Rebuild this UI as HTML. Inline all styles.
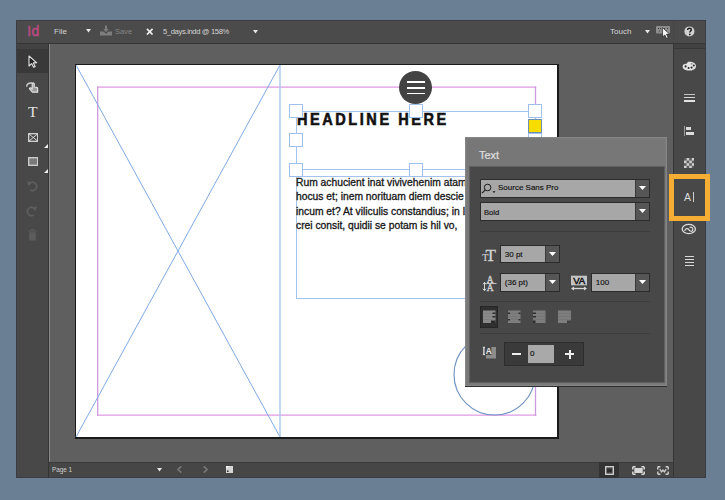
<!DOCTYPE html>
<html><head><meta charset="utf-8">
<style>
*{margin:0;padding:0;box-sizing:border-box}
html,body{width:725px;height:500px;overflow:hidden;background:#6a7f94;font-family:"Liberation Sans",sans-serif;position:relative}
div,span,svg{position:absolute}
.t{white-space:nowrap;line-height:1}
.h{width:14px;height:14px;border:1.2px solid #9fc0ec;background:#fff}
.dd{background:#a7a7a7;border:1.5px solid #2b2b2b}
.ddb{background:#565656;border-left:1.5px solid #3a3a3a}
</style></head><body>
<!-- window frame -->
<div style="left:16px;top:20px;width:690px;height:458px;background:#484848"></div>
<!-- title bar -->
<div style="left:16px;top:20px;width:690px;height:23px;background:#4b4b4b"></div>
<div style="left:16px;top:43px;width:690px;height:1px;background:#353535"></div>
<!-- left toolbar -->
<div style="left:16px;top:44px;width:32px;height:434px;background:#484848"></div>
<div style="left:16px;top:44px;width:32px;height:5px;background:#434343"></div>
<div style="left:16px;top:49px;width:32px;height:24px;background:#393939"></div>
<div style="left:48px;top:44px;width:1px;height:434px;background:#343434"></div>
<!-- canvas -->
<div style="left:49px;top:44px;width:624px;height:418px;background:#5f5f5f"></div>
<div style="left:49px;top:44px;width:1px;height:418px;background:#8a8a8a"></div>
<!-- status bar -->
<div style="left:49px;top:462px;width:624px;height:16px;background:#464646"></div>
<div style="left:49px;top:462px;width:624px;height:1px;background:#3a3a3a"></div>
<!-- right panel -->
<div style="left:673px;top:44px;width:33px;height:434px;background:#484848"></div>
<div style="left:673px;top:44px;width:33px;height:4px;background:#424242"></div>
<div style="left:673px;top:48px;width:33px;height:1px;background:#383838"></div>
<div style="left:673px;top:43px;width:1px;height:435px;background:#353535"></div>
<div style="left:673px;top:20px;width:1px;height:23px;background:#474747"></div>

<div style="left:16px;top:20px;width:690px;height:1px;background:#3a3e42"></div>
<div style="left:16px;top:20px;width:1px;height:458px;background:#3a3e42"></div>
<div style="left:705px;top:20px;width:1px;height:458px;background:#3a3e42"></div>
<div style="left:16px;top:477px;width:690px;height:1px;background:#3a3e42"></div>
<!-- page -->
<div style="left:75px;top:64px;width:484px;height:375px;background:#1a1a1a"></div>
<div style="left:76px;top:65px;width:481px;height:372px;background:#fff"></div>
<svg style="left:0;top:0" width="725" height="500" viewBox="0 0 725 500">
  <line x1="97" y1="87.2" x2="536.3" y2="87.2" stroke="#e09ae4" stroke-width="1.3"/>
  <line x1="97" y1="415.1" x2="536.3" y2="415.1" stroke="#e09ae4" stroke-width="1.3"/>
  <line x1="97.7" y1="86.4" x2="97.7" y2="415.9" stroke="#cc9ade" stroke-width="1.3"/>
  <line x1="535.5" y1="86.4" x2="535.5" y2="415.9" stroke="#cc9ade" stroke-width="1.3"/>
  <line x1="76" y1="65" x2="280" y2="437" stroke="#7fa9e0" stroke-width="1"/>
  <line x1="280" y1="65" x2="76" y2="437" stroke="#7fa9e0" stroke-width="1"/>
  <line x1="280" y1="65" x2="280" y2="437" stroke="#a9c7ee" stroke-width="1.4"/>
  <!-- headline frame -->
  <rect x="296.5" y="111.5" width="239" height="58" fill="none" stroke="#a4c3ec" stroke-width="1"/>
  <!-- body frame -->
  <rect x="296.5" y="176.5" width="239" height="122" fill="none" stroke="#a4c3ec" stroke-width="1"/>
  <!-- circle frame -->
  <circle cx="494.5" cy="374.5" r="40.5" fill="none" stroke="#6e92c2" stroke-width="1.15"/>
</svg>
<!-- headline text -->
<div class="t" style="left:297px;top:111px;font-size:16.5px;font-weight:bold;letter-spacing:2.9px;color:#111;-webkit-text-stroke:0.6px #111;transform:scaleX(0.88);transform-origin:0 0">HEADLINE HERE</div>
<!-- body text -->
<div class="t" style="left:296px;top:175.8px;font-size:10.3px;line-height:14.45px;color:#151515;-webkit-text-stroke:0.3px #151515">Rum achucient inat vivivehenim atam<br>hocus et; inem norituam diem descie<br>incum et? At viliculis constandius; in I<br>crei consit, quidii se potam is hil vo,</div>
<!-- handles -->
<div class="h" style="left:289px;top:104px"></div>
<div class="h" style="left:289px;top:133px"></div>
<div class="h" style="left:289px;top:163px"></div>
<div class="h" style="left:408.5px;top:104px"></div>
<div class="h" style="left:408.5px;top:163px"></div>
<div class="h" style="left:528px;top:104px"></div>
<div class="h" style="left:528px;top:133px"></div>
<div style="left:528px;top:119px;width:14px;height:14px;border:1px solid #6f8fb0;background:#f7dc00"></div>


<!-- menu circle -->
<div style="left:399px;top:71px;width:33px;height:33px;border-radius:50%;background:#434343"></div>
<div style="left:407px;top:81px;width:18px;height:1.6px;background:#fff"></div>
<div style="left:407px;top:87px;width:18px;height:1.6px;background:#fff"></div>
<div style="left:407px;top:92.6px;width:18px;height:1.6px;background:#fff"></div>

<!-- Text panel -->
<div style="left:465px;top:137px;width:202px;height:250px;background:#2e2e2e"></div>
<div style="left:465px;top:137px;width:202px;height:249px;background:#777;box-shadow:inset 0 0 0 1px #858585, inset 0 0 0 2.5px #7b7b7b"></div>
<div style="left:470px;top:166.5px;width:194px;height:215.5px;background:#484848;box-shadow:0 0 0 1px #606060"></div>
<div class="t" style="left:479px;top:149.6px;font-size:11px;color:#e0e0e0;-webkit-text-stroke:0.2px #e0e0e0">Text</div>

<!-- font dropdown -->
<div class="dd" style="left:480px;top:179px;width:170px;height:19px"></div>
<div class="ddb" style="left:635px;top:180px;width:14px;height:17px"></div>
<svg style="left:639px;top:186px" width="7" height="4" viewBox="0 0 7 4"><path d="M0 0H7L3.5 4Z" fill="#fff"/></svg>
<svg style="left:481px;top:182px" width="16" height="13" viewBox="0 0 16 13"><circle cx="6.6" cy="5.5" r="3.3" fill="none" stroke="#1a1a1a" stroke-width="1"/><line x1="4.3" y1="7.9" x2="1" y2="11.2" stroke="#1a1a1a" stroke-width="1.2"/><path d="M11.5 9.3h3l-1.5 1.6z" fill="#1a1a1a"/></svg>
<div class="t" style="left:498px;top:184px;font-size:8px;color:#111;-webkit-text-stroke:0.15px #111">Source Sans Pro</div>
<!-- style dropdown -->
<div class="dd" style="left:480px;top:202px;width:170px;height:19px"></div>
<div class="ddb" style="left:635px;top:203px;width:14px;height:17px"></div>
<svg style="left:639px;top:209px" width="7" height="4" viewBox="0 0 7 4"><path d="M0 0H7L3.5 4Z" fill="#fff"/></svg>
<div class="t" style="left:484px;top:209px;font-size:7.6px;color:#111;-webkit-text-stroke:0.15px #111">Bold</div>
<div style="left:480px;top:231px;width:170px;height:1px;background:#3c3c3c"></div>
<!-- size -->
<div class="dd" style="left:500px;top:245px;width:60px;height:18px"></div>
<div class="ddb" style="left:545px;top:246px;width:14px;height:16px"></div>
<svg style="left:549px;top:252px" width="7" height="4" viewBox="0 0 7 4"><path d="M0 0H7L3.5 4Z" fill="#fff"/></svg>
<div class="t" style="left:504.8px;top:250.8px;font-size:8px;color:#111;-webkit-text-stroke:0.15px #111">30 pt</div>
<!-- leading -->
<div class="dd" style="left:500px;top:273px;width:60px;height:19px"></div>
<div class="ddb" style="left:545px;top:274px;width:14px;height:17px"></div>
<svg style="left:549px;top:280px" width="7" height="4" viewBox="0 0 7 4"><path d="M0 0H7L3.5 4Z" fill="#fff"/></svg>
<div class="t" style="left:504.8px;top:278.8px;font-size:8px;color:#111;-webkit-text-stroke:0.15px #111">(36 pt)</div>
<!-- tracking -->
<div class="dd" style="left:591px;top:273px;width:59px;height:19px"></div>
<div class="ddb" style="left:635px;top:274px;width:14px;height:17px"></div>
<svg style="left:639px;top:280px" width="7" height="4" viewBox="0 0 7 4"><path d="M0 0H7L3.5 4Z" fill="#fff"/></svg>
<div class="t" style="left:595.8px;top:278.8px;font-size:8px;color:#111;-webkit-text-stroke:0.15px #111">100</div>
<div style="left:480px;top:301px;width:170px;height:1px;background:#3e3e3e"></div>
<!-- align buttons -->
<div style="left:480px;top:306px;width:18px;height:22px;background:#303030;border:1px solid #262626"></div>

<div style="left:480px;top:333px;width:170px;height:1px;background:#3e3e3e"></div>

<!-- panel icons -->
<svg style="left:480px;top:247px" width="20" height="16" viewBox="0 0 20 16"><text x="2.2" y="13.8" font-family="Liberation Serif" font-size="10" fill="#d4d4d4" stroke="#d4d4d4" stroke-width="0.2">T</text><text x="5.5" y="13.8" font-family="Liberation Serif" font-size="17" fill="#d4d4d4" stroke="#d4d4d4" stroke-width="0.3">T</text></svg>
<svg style="left:480px;top:274px" width="20" height="19" viewBox="0 0 20 19"><text x="6.8" y="8.6" font-family="Liberation Serif" font-size="9.4" fill="#d4d4d4" stroke="#d4d4d4" stroke-width="0.35">A</text><rect x="6.5" y="9" width="10" height="0.9" fill="#d4d4d4"/><text x="6.8" y="16.9" font-family="Liberation Serif" font-size="9.4" fill="#d4d4d4" stroke="#d4d4d4" stroke-width="0.35">A</text><path d="M4.5 8.5v8M2.9 10.3l1.6-2 1.6 2M2.9 14.7l1.6 2 1.6-2" fill="none" stroke="#d4d4d4" stroke-width="1"/></svg>
<svg style="left:570px;top:275px" width="18" height="16" viewBox="0 0 18 16"><rect x="1" y="0.7" width="16" height="9.6" fill="#c4c4c4"/><text x="9" y="9.4" font-family="Liberation Sans" font-size="9.6" text-anchor="middle" fill="#111" stroke="#111" stroke-width="0.45" letter-spacing="-0.4">VA</text><path d="M2.5 13.5h13" stroke="#d8d8d8" stroke-width="1.3"/><path d="M1 13.5l3-2v4zM17 13.5l-3-2v4z" fill="#d8d8d8"/></svg>
<!-- align icons -->
<svg style="left:483px;top:310px" width="13" height="14" viewBox="0 0 13 14"><rect x="0" y="0.5" width="12.5" height="12.5" fill="#8a8a8a"/><path d="M0 3.5h12.5M0 6.5h12.5M0 9.5h12.5" stroke="#7a7a7a" stroke-width="0.6"/><path d="M9.5 2.5h3v1.5h-3zM9.5 6h3v1.5h-3zM8 10.5h4.5v2.5H8z" fill="#2a2a2a"/></svg>
<svg style="left:508px;top:310px" width="13" height="14" viewBox="0 0 13 14"><rect x="0" y="0.5" width="12.5" height="12.5" fill="#7e7e7e"/><path d="M0 3.5h12.5M0 6.5h12.5M0 9.5h12.5" stroke="#707070" stroke-width="0.6"/><path d="M0 2.5h2v1.5H0zM10.5 2.5h2v1.5h-2zM0 9h2v1.5H0zM10.5 9h2v1.5h-2z" fill="#2e2e2e"/></svg>
<svg style="left:533px;top:310px" width="13" height="14" viewBox="0 0 13 14"><rect x="0" y="0.5" width="12.5" height="12.5" fill="#7e7e7e"/><path d="M0 3.5h12.5M0 6.5h12.5M0 9.5h12.5" stroke="#707070" stroke-width="0.6"/><path d="M0 2.5h3v1.5H0zM0 6h3v1.5H0zM0 10.5h2.5v2.5H0z" fill="#2e2e2e"/></svg>
<svg style="left:558px;top:310px" width="14" height="14" viewBox="0 0 14 14"><rect x="0" y="0.5" width="13" height="12.5" fill="#7e7e7e"/><path d="M0 3.5h13M0 6.5h13M0 9.5h13" stroke="#707070" stroke-width="0.6"/><path d="M9 10.5h4v2.5H9z" fill="#404040"/></svg>
<!-- baseline shift icon -->
<svg style="left:482px;top:346px" width="16" height="14" viewBox="0 0 16 14"><rect x="4" y="1" width="10" height="11.5" fill="#8c8c8c"/><rect x="3.6" y="1" width="5.8" height="8" fill="#484848"/><text x="3.8" y="8.2" font-family="Liberation Sans" font-weight="bold" font-size="8.2" fill="#e8e8e8">A</text><path d="M1.9 1.6v6.8" stroke="#e8e8e8" stroke-width="1.3"/><path d="M0.8 1.3h2.2M0.8 8.6h2.2" stroke="#e8e8e8" stroke-width="1"/></svg>
<!-- baseline shift -->
<div style="left:504px;top:342px;width:80px;height:24px;background:#3a3a3a;border:1px solid #2e2e2e"></div>
<div style="left:528px;top:345px;width:26px;height:18px;background:#a9a9a9"></div>
<div style="left:512px;top:353px;width:9px;height:2px;background:#eee"></div>
<div style="left:565px;top:353px;width:9px;height:2px;background:#eee"></div>
<div style="left:568.5px;top:349.5px;width:2px;height:9px;background:#eee"></div>
<div class="t" style="left:530px;top:350px;font-size:8px;color:#111;-webkit-text-stroke:0.2px #111">0</div>


<!-- ===== title bar content ===== -->
<div class="t" style="left:27.3px;top:24px;font-size:14px;color:#b94a7f;-webkit-text-stroke:0.5px #b94a7f;letter-spacing:0.2px">Id</div>
<div class="t" style="left:54px;top:27.5px;font-size:8px;color:#d4d4d4">File</div>
<svg style="left:86px;top:29px" width="5" height="4" viewBox="0 0 5 4"><path d="M0 0H5L2.5 3.5Z" fill="#e6e6e6"/></svg>
<svg style="left:99px;top:24.5px" width="14" height="11" viewBox="0 0 14 11"><path d="M7 0.5v4.5" stroke="#7e7e7e" stroke-width="2"/><path d="M4.3 4h5.4L7 7.2Z" fill="#7e7e7e"/><path d="M1 6.5h3.5L7 8.8l2.5-2.3H13v4H1Z" fill="#7e7e7e"/></svg>
<div class="t" style="left:115px;top:28px;font-size:7.5px;color:#858585">Save</div>
<svg style="left:146px;top:27.6px" width="7.5" height="7.5" viewBox="0 0 8 8"><path d="M1 1L7 7M7 1L1 7" stroke="#f0f0f0" stroke-width="1.7"/></svg>
<div class="t" style="left:163px;top:28px;font-size:7.6px;letter-spacing:-0.35px;color:#d4d4d4">5_days.indd @ 158%</div>
<svg style="left:253px;top:29.5px" width="5" height="4" viewBox="0 0 5 4"><path d="M0 0H5L2.5 3.5Z" fill="#e6e6e6"/></svg>
<div class="t" style="left:610px;top:27.5px;font-size:8px;color:#d4d4d4">Touch</div>
<svg style="left:644.5px;top:29.5px" width="5" height="4" viewBox="0 0 5 4"><path d="M0 0H5L2.5 3.5Z" fill="#e6e6e6"/></svg>
<svg style="left:655px;top:25px" width="17" height="14" viewBox="0 0 17 14"><rect x="1" y="1" width="14" height="7.5" rx="1" fill="#8e8e8e"/><path d="M3 3h1v1H3zM5 3h1v1H5zM9 3h1v1H9zM12 3h1v1h-1zM4 5.5h1v1H4zM11 5.5h1v1h-1z" fill="#3a3a3a"/><path d="M7.4 2.6L7.6 12L9.8 10L11.5 13.4L13.2 12.6L11.5 9.3L14.6 9.1Z" fill="#f4f4f4" stroke="#222" stroke-width="0.7" stroke-linejoin="round"/></svg>
<svg style="left:684px;top:26px" width="11" height="11" viewBox="0 0 11 11"><circle cx="5.4" cy="5.4" r="5" fill="#d2d2d2"/><path d="M3.6 4C3.6 2.8 4.4 2.2 5.5 2.2C6.7 2.2 7.4 2.9 7.4 3.8C7.4 5 5.8 5.2 5.8 6.6" fill="none" stroke="#1e1e1e" stroke-width="1.4"/><circle cx="5.8" cy="8.4" r="0.85" fill="#1e1e1e"/></svg>

<!-- ===== left tools ===== -->
<svg style="left:28px;top:55px" width="10" height="13" viewBox="0 0 10 13"><path d="M1 1V11L3.6 8.6L5.6 12.2L7.2 11.4L5.3 7.9L8.8 7.8Z" fill="#222" stroke="#e4e4e4" stroke-width="1.1" stroke-linejoin="round"/></svg>
<svg style="left:22px;top:78px" width="20" height="18" viewBox="0 0 20 18"><path d="M4.6 8.8C4.8 6.2 7 4.8 10 5" fill="none" stroke="#cfcfcf" stroke-width="1.3"/><path d="M7.4 10.6L10.4 14.2H15.6V10.6Q15.6 9.6 14.6 9.4L12.2 9V5.6Q11.2 4.2 10.2 5.6V11.2L8.8 9.8Q7.8 9.6 7.4 10.6Z" fill="#9a9a9a" stroke="#e0e0e0" stroke-width="1.2" stroke-linejoin="round"/></svg>
<div class="t" style="left:28px;top:106px;font-family:'Liberation Serif',serif;font-size:14px;color:#e0e0e0;transform:scaleX(1.12);transform-origin:0 0">T</div>
<svg style="left:27.5px;top:132.5px" width="10.5" height="9" viewBox="0 0 10.5 9"><rect x="0.7" y="0.7" width="9" height="7.6" fill="none" stroke="#d6d6d6" stroke-width="1.3"/><path d="M1 1L9.5 8M9.5 1L1 8" stroke="#d6d6d6" stroke-width="1"/></svg>
<svg style="left:44px;top:144px" width="4" height="4" viewBox="0 0 4 4"><path d="M4 0V4H0Z" fill="#eee"/></svg>
<svg style="left:27.5px;top:156.5px" width="10.5" height="9" viewBox="0 0 10.5 9"><rect x="0.7" y="0.7" width="9" height="7.6" fill="#7a7a7a" stroke="#d2d2d2" stroke-width="1.3"/></svg>
<svg style="left:44px;top:168.5px" width="4" height="4" viewBox="0 0 4 4"><path d="M4 0V4H0Z" fill="#eee"/></svg>
<svg style="left:26px;top:180px" width="12" height="12" viewBox="0 0 12 12"><path d="M3.6 3.6A4.1 4.1 0 1 1 4.4 10" fill="none" stroke="#5e5e5e" stroke-width="1.7"/><path d="M1.2 1.2L6.2 2.4L2.4 6.2Z" fill="#5e5e5e"/></svg>
<svg style="left:26px;top:205px" width="12" height="12" viewBox="0 0 12 12"><path d="M8.4 3.6A4.1 4.1 0 1 0 7.6 10" fill="none" stroke="#5e5e5e" stroke-width="1.7"/><path d="M10.8 1.2L5.8 2.4L9.6 6.2Z" fill="#5e5e5e"/></svg>
<svg style="left:28px;top:229px" width="9" height="12" viewBox="0 0 9 12"><path d="M3 0.5H6M0.5 2H8.5" stroke="#5c5c5c" stroke-width="1.2"/><rect x="1.2" y="3.2" width="6.6" height="8.3" fill="#5c5c5c"/></svg>

<!-- ===== right panel icons ===== -->
<svg style="left:682px;top:61px" width="15" height="10" viewBox="0 0 15 10"><path d="M6 0.8C9.5 0.2 14 1.6 14 5.2C14 8.2 10.5 9.6 7 9.6C3 9.6 0.6 8 0.6 5.6C0.6 3.6 2.4 2.6 4.6 2.8Z" fill="#e4e4e4"/><circle cx="3.6" cy="5.4" r="1.05" fill="#2a2a2a"/><circle cx="6.6" cy="7" r="1.05" fill="#2a2a2a"/><circle cx="9.6" cy="6.6" r="1.05" fill="#2a2a2a"/><circle cx="11.8" cy="4.6" r="1" fill="#2a2a2a"/><circle cx="9.6" cy="2.8" r="0.9" fill="#8a8a8a"/></svg>
<div style="left:683.5px;top:93.9px;width:11px;height:1.1px;background:#c4c4c4"></div>
<div style="left:683.5px;top:96.9px;width:11px;height:1.3px;background:#d8d8d8"></div>
<div style="left:683.5px;top:100.2px;width:11px;height:1.7px;background:#e2e2e2"></div>
<div style="left:684px;top:126px;width:1.3px;height:10px;background:#9a9a9a"></div>
<div style="left:685.8px;top:126.8px;width:5.7px;height:3.2px;background:#dcdcdc"></div>
<div style="left:685.8px;top:131.5px;width:8.3px;height:3.6px;background:#dcdcdc"></div>
<svg style="left:683.7px;top:157.5px" width="10.4" height="10.4" viewBox="0 0 10.4 10.4"><rect width="10.4" height="10.4" fill="#d0d0d0"/><g fill="#5c5c5c"><rect x="0.00" y="0.00" width="2.60" height="2.60"/><rect x="5.20" y="0.00" width="2.60" height="2.60"/><rect x="2.60" y="2.60" width="2.60" height="2.60"/><rect x="7.80" y="2.60" width="2.60" height="2.60"/><rect x="0.00" y="5.20" width="2.60" height="2.60"/><rect x="5.20" y="5.20" width="2.60" height="2.60"/><rect x="2.60" y="7.80" width="2.60" height="2.60"/><rect x="7.80" y="7.80" width="2.60" height="2.60"/></g></svg>
<div style="left:668.7px;top:173.8px;width:41.4px;height:47px;border:5px solid #f6ad33"></div>
<div class="t" style="left:684px;top:191.5px;font-size:10.5px;color:#dcdcdc">A</div>
<div style="left:692.5px;top:192px;width:1.2px;height:9.5px;background:#d0d0d0"></div>
<svg style="left:681px;top:222.5px" width="16" height="12" viewBox="0 0 16 12"><ellipse cx="7.8" cy="6" rx="6.6" ry="4.6" fill="none" stroke="#dcdcdc" stroke-width="1.3"/><path d="M3.8 8C4.2 5.2 6.8 5 8 6.8S11.4 9 11.8 6.6C12 4.8 10.2 3.6 8.6 4.6" fill="none" stroke="#dcdcdc" stroke-width="1.2"/></svg>
<div style="left:685px;top:256px;width:8.5px;height:1.4px;background:#dadada"></div>
<div style="left:685px;top:259px;width:8.5px;height:1.4px;background:#dadada"></div>
<div style="left:685px;top:262px;width:8.5px;height:1.4px;background:#dadada"></div>
<div style="left:685px;top:265px;width:8.5px;height:1.4px;background:#dadada"></div>

<!-- ===== status bar ===== -->
<div class="t" style="left:52px;top:467px;font-size:6.4px;letter-spacing:-0.05px;color:#d0d0d0">Page 1</div>
<svg style="left:157px;top:468px" width="5" height="4" viewBox="0 0 5 4"><path d="M0 0H5L2.5 3.5Z" fill="#e6e6e6"/></svg>
<svg style="left:177px;top:466px" width="5" height="7" viewBox="0 0 5 7"><path d="M4.3 0.4L0.8 3.5L4.3 6.6" fill="none" stroke="#7a7a7a" stroke-width="1.6"/></svg>
<svg style="left:202.5px;top:466px" width="5" height="7" viewBox="0 0 5 7"><path d="M0.7 0.4L4.2 3.5L0.7 6.6" fill="none" stroke="#7a7a7a" stroke-width="1.6"/></svg>
<svg style="left:225.5px;top:466px" width="7" height="7" viewBox="0 0 7 7"><rect x="0" y="0" width="7" height="7" fill="#d6d6d6"/><path d="M0 0h3.5L0 3z" fill="#f4f4f4"/><circle cx="1.8" cy="5.2" r="0.9" fill="#333"/></svg>
<div style="left:599px;top:462px;width:20px;height:16px;background:#333"></div>
<svg style="left:605px;top:466px" width="9" height="9" viewBox="0 0 9 9"><rect x="0.7" y="0.7" width="7.6" height="7.6" fill="#444" stroke="#d8d8d8" stroke-width="1.3"/><rect x="2" y="3.3" width="5" height="2.6" fill="#2a2a2a"/></svg>
<svg style="left:631.5px;top:466px" width="13" height="9" viewBox="0 0 13 9"><rect x="2.3" y="2" width="8.4" height="5" fill="#d8d8d8"/><path d="M0.8 0.8h2.8M0.8 0.8v2.8M12.2 0.8h-2.8M12.2 0.8v2.8M0.8 8.2h2.8M0.8 8.2v-2.8M12.2 8.2h-2.8M12.2 8.2v-2.8" stroke="#d8d8d8" stroke-width="1.5"/></svg>
<svg style="left:657px;top:466px" width="12" height="9" viewBox="0 0 12 9"><path d="M0.8 0.8h2.6M0.8 0.8v2.6M11.2 0.8h-2.6M11.2 0.8v2.6M0.8 8.2h2.6M0.8 8.2v-2.6M11.2 8.2h-2.6M11.2 8.2v-2.6" stroke="#d0d0d0" stroke-width="1.4"/><path d="M2.8 3.2L4.5 5.8L6 4L7.5 5.8L9.2 3.2" fill="none" stroke="#d0d0d0" stroke-width="1.3"/></svg>
</body></html>
